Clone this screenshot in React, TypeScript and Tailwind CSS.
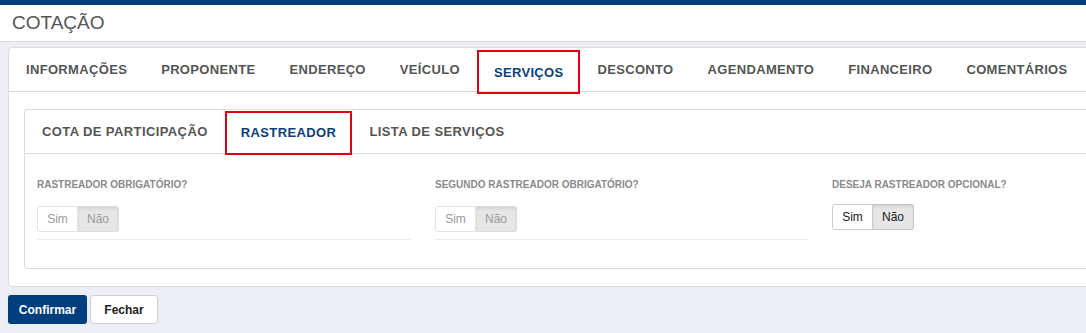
import React from "react";

const outerTabs = ["INFORMAÇÕES", "PROPONENTE", "ENDEREÇO", "VEÍCULO", "SERVIÇOS", "DESCONTO", "AGENDAMENTO", "FINANCEIRO", "COMENTÁRIOS"];
const innerTabs = ["COTA DE PARTICIPAÇÃO", "RASTREADOR", "LISTA DE SERVIÇOS"];

function Toggle({ active, withLine }: { active?: boolean; withLine?: boolean }) {
  return (
    <div className={active ? "pt-[13px]" : "pt-[15px]"}>
      <div className="flex">
        <div
          className={
            "flex h-[26px] w-[41px] items-center justify-center rounded-l-[3px] border bg-white text-[12px] " +
            (active ? "border-[#ccc] text-[#222]" : "border-[#e2e2e2] text-[#9a9a9a]")
          }
        >
          Sim
        </div>
        <div
          className={
            "flex h-[26px] w-[41px] items-center justify-center rounded-r-[3px] border border-l-0 bg-[#e6e6e6] text-[12px] shadow-[inset_0_2px_3px_rgba(0,0,0,0.08)] " +
            (active ? "border-[#c4c4c4] text-[#222]" : "border-[#dcdcdc] text-[#9a9a9a]")
          }
        >
          Não
        </div>
      </div>
      {withLine ? <div className="mt-[7px] h-px w-[374px] bg-[#ececec]" /> : <div className="mt-[9px] h-px" />}
    </div>
  );
}

export default function App() {
  return (
    <div className="min-h-[333px] w-[1086px] overflow-hidden bg-[#ededf6] font-['Liberation_Sans',Arial,sans-serif]">
      <div className="h-[5px] bg-[#003e7e]" />
      <div className="flex h-[37px] items-center border-b border-[#dcdcdc] bg-white pl-[12px] pt-[1px] text-[19px] text-[#555]">
        COTAÇÃO
      </div>
      <div className="ml-[8px] mt-[5px] w-[1100px] rounded-[4px] border border-[#dcdcdc] bg-white pb-[17px]">
        <div className="flex h-[44px] border-b border-[#dcdcdc]">
          {outerTabs.map((t) => (
            <div
              key={t}
              className={
                "flex items-center text-[13px] font-bold tracking-[0.33px] " +
                (t === "SERVIÇOS"
                  ? "mt-[2px] h-[44px] border-2 border-[#e3000f] px-[15px] pt-[1px] text-[#0b3f7c]"
                  : "px-[17px] text-[#555]")
              }
            >
              {t}
            </div>
          ))}
        </div>
        <div className="ml-[15px] mt-[17px] rounded-[3px] border border-[#dcdcdc] pb-[28px]">
          <div className="flex h-[44px] border-b border-[#dcdcdc]">
            {innerTabs.map((t) => (
              <div
                key={t}
                className={
                  "flex items-center text-[13px] font-bold tracking-[0.4px] " +
                  (t === "RASTREADOR"
                    ? "mt-[1px] h-[44px] border-2 border-[#e3000f] px-[14px] text-[#0b3f7c]"
                    : "px-[17px] text-[#555]")
                }
              >
                {t}
              </div>
            ))}
          </div>
          <div className="flex pl-[12px] pt-[25px]">
            <div className="w-[398px]">
              <div className="text-[10px] font-bold leading-[12px] text-[#8a8a8a]">RASTREADOR OBRIGATÓRIO?</div>
              <Toggle withLine />
            </div>
            <div className="w-[397px]">
              <div className="text-[10px] font-bold leading-[12px] text-[#8a8a8a]">SEGUNDO RASTREADOR OBRIGATÓRIO?</div>
              <Toggle withLine />
            </div>
            <div className="w-[260px]">
              <div className="text-[10px] font-bold leading-[12px] text-[#8a8a8a]">DESEJA RASTREADOR OPCIONAL?</div>
              <Toggle active />
            </div>
          </div>
        </div>
      </div>
      <div className="ml-[8px] mt-[8px] flex gap-[3px]">
        <button className="h-[29px] w-[79px] rounded-[3px] bg-[#003e7e] text-[12px] font-bold text-white">Confirmar</button>
        <button className="h-[29px] w-[68px] rounded-[3px] border border-[#cfcfcf] bg-white text-[12px] font-bold text-[#222]">Fechar</button>
      </div>
    </div>
  );
}
